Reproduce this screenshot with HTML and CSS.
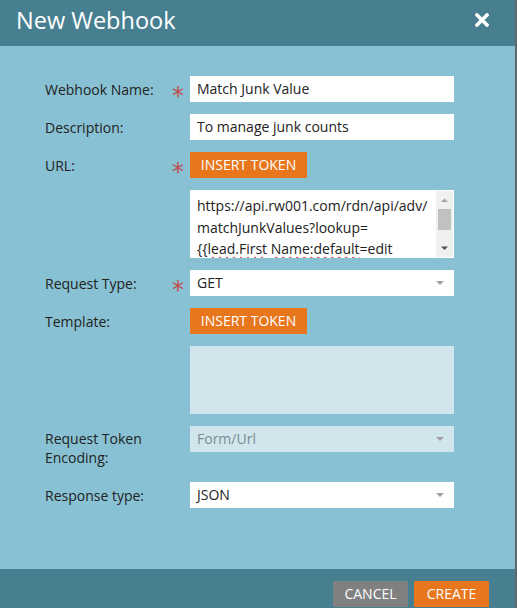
FILE: index.html
```html
<!DOCTYPE html>
<html>
<head>
<meta charset="utf-8">
<link rel="stylesheet" href="styles.css">
</head>
<body>
<div class="dialog">
  <div class="header">
    <span class="title">New Webhook</span>
    <svg class="close" width="14" height="14" viewBox="0 0 14 14"><path d="M2 2 L12 12 M12 2 L2 12" stroke="#fff" stroke-width="3.6" stroke-linecap="square"/></svg>
  </div>
  <div class="body">
    <div class="form">
      <div class="label">Webhook Name:</div><div class="star">*</div>
      <div class="input">Match Junk Value</div>

      <div class="label">Description:</div><div class="star"></div>
      <div class="input">To manage junk counts</div>

      <div class="label">URL:</div><div class="star">*</div>
      <div><button class="btn orange">INSERT TOKEN</button></div>

      <div class="label"></div><div class="star"></div>
      <div class="textarea">
        <div class="ta-text">https://api.rw001.com/rdn/api/adv/<br>matchJunkValues?lookup=<br>{{<span class="sq">lead.First</span> <span class="sq">Name:default</span>=edit<br>}}&amp;leadValue={{lead.Middle Name}}</div>
        <div class="scrollbar">
          <svg class="arr" width="17" height="9" viewBox="0 0 17 9"><path d="M5 7 L8.5 3.5 L12 7 Z" fill="#a3a3a3"/></svg>
          <div class="thumb"></div>
          <div class="spacer"></div>
          <svg class="arr" width="17" height="9" viewBox="0 0 17 9"><path d="M5 2.5 L8.5 6 L12 2.5 Z" fill="#505050"/></svg>
        </div>
      </div>

      <div class="label">Request Type:</div><div class="star">*</div>
      <div class="input select">GET<span class="caret"></span></div>

      <div class="label">Template:</div><div class="star"></div>
      <div><button class="btn orange">INSERT TOKEN</button></div>

      <div class="label"></div><div class="star"></div>
      <div class="textarea disabled"></div>

      <div class="label two">Request Token Encoding:</div><div class="star"></div>
      <div class="input select disabled top">Form/Url<span class="caret"></span></div>

      <div class="label after">Response type:</div><div class="star after"></div>
      <div class="input select after">JSON<span class="caret"></span></div>
    </div>
  </div>
  <div class="footer">
    <button class="btn grey">CANCEL</button>
    <button class="btn orange">CREATE</button>
  </div>
</div>
</body>
</html>
```

FILE: styles.css
```css
html, body {
  margin: 0;
  padding: 0;
  background: #5c6771;
  height: 608px;
  overflow: hidden;
}
body {
  font-family: "Open Sans", "Liberation Sans", sans-serif;
  font-size: 14px;
  color: #222;
}
.dialog {
  width: 515px;
  height: 608px;
  display: flex;
  flex-direction: column;
  background: #88c1d3;
}
.header {
  height: 46px;
  background: #477f91;
  display: flex;
  align-items: center;
  justify-content: space-between;
  padding: 0 26px 0 16px;
  flex: none;
}
.title {
  color: #fff;
  font-size: 23.5px;
  line-height: 30px;
  margin-top: -6px;
}
.close {
  margin-top: -6px;
}
.body {
  flex: 1;
  padding: 30px 0 0 45px;
}
.form {
  display: grid;
  grid-template-columns: 128px 17px 264px;
  row-gap: 12px;
  align-items: center;
}
.label {
  color: #222;
  line-height: 19px;
}
.label.two {
  align-self: start;
  padding-top: 3px;
}
.top { align-self: start; }
.after { margin-top: 3px; }
.star {
  color: #c0504d;
  font-size: 24px;
  line-height: 26px;
  height: 26px;
  padding-top: 7px;
  box-sizing: border-box;
  font-family: "DejaVu Sans", sans-serif;
  text-indent: -1px;
}
.input {
  height: 26px;
  background: #fff;
  padding: 0 7px;
  line-height: 26px;
  box-sizing: border-box;
  color: #222;
  position: relative;
}
.input.disabled {
  background: #d0e6ec;
  color: #7b8a90;
}
.caret {
  position: absolute;
  right: 10px;
  top: 11px;
  width: 0;
  height: 0;
  border-left: 4px solid transparent;
  border-right: 4px solid transparent;
  border-top: 4px solid #a0a0a0;
}
.btn {
  font-family: "Open Sans", "Liberation Sans", sans-serif;
  font-size: 14px;
  color: #fff;
  border: 0;
  height: 26px;
  padding: 0 11px;
  line-height: 26px;
  cursor: pointer;
  display: inline-block;
  vertical-align: top;
}
.btn.orange { background: #e8761c; }
.btn.grey { background: #808080; }
.form .btn { width: 117px; padding: 0; }
.textarea {
  height: 68px;
  background: #fff;
  display: flex;
  overflow: hidden;
}
.textarea.disabled {
  background: #d0e6ec;
}
.ta-text {
  flex: 1;
  padding: 5px 0 0 7px;
  line-height: 21.5px;
  color: #222;
  white-space: nowrap;
  overflow: hidden;
}
.sq {
  text-decoration: underline wavy #e03030;
  text-decoration-thickness: 1px;
  text-underline-offset: 2px;
}
.scrollbar {
  width: 17px;
  background: #f0f0f0;
  display: flex;
  flex-direction: column;
  margin: 1px 1px 1px 0;
}
.arr { display: block; flex: none; margin: 4px 0 0; }
.thumb {
  margin: 5px 2px 0;
  height: 21px;
  background: #c1c1c1;
}
.spacer { flex: 1; }
.scrollbar .arr:last-child { margin: 0 0 4px; }
.footer {
  height: 39px;
  flex: none;
  background: #477f91;
  display: flex;
  justify-content: flex-end;
  align-items: flex-start;
  gap: 6px;
  padding: 12px 26px 0 0;
  box-sizing: border-box;
}
.footer .btn { width: 75px; padding: 0; }
```
